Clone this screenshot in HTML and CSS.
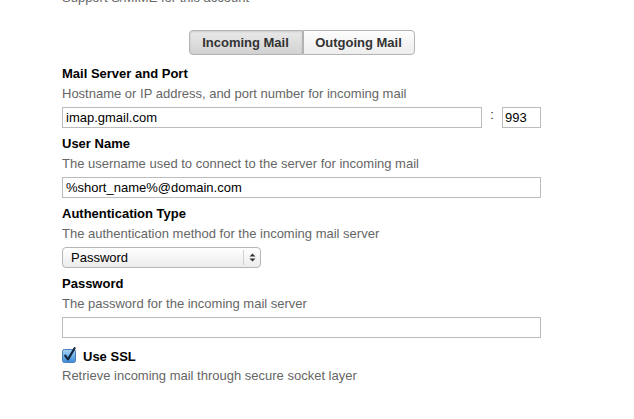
FILE: index.html
```html
<!DOCTYPE html>
<html>
<head>
  <title>Account Settings</title>
  <link rel="stylesheet" href="styles.css">
</head>
<body>
  <div class="container">
    <p class="intro">Support S/MIME for this account</p>

    <div class="tabs">
      <button class="tab active">Incoming Mail</button>
      <button class="tab">Outgoing Mail</button>
    </div>

    <div class="field">
      <div class="label">Mail Server and Port</div>
      <div class="desc">Hostname or IP address, and port number for incoming mail</div>
      <div class="server-row">
        <input type="text" class="text host" value="imap.gmail.com">
        <span class="colon">:</span>
        <input type="text" class="text port" value="993">
      </div>
    </div>

    <div class="field">
      <div class="label">User Name</div>
      <div class="desc">The username used to connect to the server for incoming mail</div>
      <input type="text" class="text wide" value="%short_name%@domain.com">
    </div>

    <div class="field">
      <div class="label">Authentication Type</div>
      <div class="desc">The authentication method for the incoming mail server</div>
      <div class="select-wrap">
        <select class="select">
          <option>Password</option>
          <option>MD5 Challenge-Response</option>
          <option>NTLM</option>
          <option>Kerberos</option>
        </select>
        <span class="select-arrows">
          <svg width="7" height="9" viewBox="0 0 7 9"><path d="M3.5 0.5 L6.5 3.5 L0.5 3.5 Z M3.5 8.5 L6.5 5.5 L0.5 5.5 Z" fill="#333"/></svg>
        </span>
      </div>
    </div>

    <div class="field">
      <div class="label">Password</div>
      <div class="desc">The password for the incoming mail server</div>
      <input type="password" class="text wide" value="">
    </div>

    <div class="check-row">
      <span class="checkbox">
        <svg width="16" height="16" viewBox="0 0 16 16">
          <defs>
            <linearGradient id="cb" x1="0" y1="0" x2="0" y2="1">
              <stop offset="0" stop-color="#a9d3f5"/>
              <stop offset="0.5" stop-color="#6fb0e8"/>
              <stop offset="1" stop-color="#3b8ad8"/>
            </linearGradient>
          </defs>
          <rect x="0.5" y="2.5" width="13" height="13" rx="2" fill="url(#cb)" stroke="#4a7fb5"/>
          <path d="M3.2 8.6 L6 12.4 L12.6 1.2" fill="none" stroke="#12263d" stroke-width="2.2" stroke-linecap="round" stroke-linejoin="round"/>
        </svg>
      </span>
      <span class="check-label">Use SSL</span>
    </div>
    <div class="desc">Retrieve incoming mail through secure socket layer</div>
  </div>
</body>
</html>
```

FILE: styles.css
```css
body { margin: 0; font-family: "Liberation Sans", Arial, sans-serif; font-size: 13px; background: #fff; }
.container { width: 479px; margin-left: 62px; }
.intro { margin: -12px 0 0; line-height: 20px; color: #666; }

.tabs { display: flex; justify-content: center; margin: 22px 0 9px; }
.tab { font-family: inherit; font-size: 13px; font-weight: bold; color: #333; height: 25px; padding: 0 11px; border: 1px solid #b3b3b3; background: linear-gradient(#fdfdfd, #ededed); cursor: pointer; }
.tab:first-child { border-radius: 4px 0 0 4px; border-right: none; width: 114px; }
.tab:last-child { border-radius: 0 4px 4px 0; width: 112px; }
.tab.active { background: linear-gradient(#e9e9e9, #d2d2d2); border-right: 1px solid #b3b3b3; box-shadow: inset 0 1px 2px rgba(0,0,0,0.12); }

.field { margin-bottom: 6px; }
.label { font-weight: bold; color: #000; line-height: 20px; }
.desc { color: #666; line-height: 20px; }

.text { box-sizing: border-box; height: 21px; margin-top: 3px; border: 1px solid #bcbcbc; padding: 0 3px; font-family: inherit; font-size: 13px; color: #000; outline: none; }
.wide { width: 479px; display: block; }
.server-row { display: flex; align-items: center; margin-top: 3px; }
.server-row .text { margin-top: 0; }
.host { width: 420px; }
.colon { width: 20px; text-align: center; color: #333; margin-top: -6px; }
.port { width: 39px; padding: 0 2px; }

.select-wrap { position: relative; width: 199px; margin-top: 3px; }
.select { appearance: none; -webkit-appearance: none; box-sizing: border-box; width: 199px; height: 21px; padding: 0 20px 0 8px; border: 1px solid #b5b5b5; border-radius: 4px; background: linear-gradient(#ffffff, #ececec); font-family: inherit; font-size: 13px; color: #000; outline: none; }
.select-arrows { position: absolute; right: 1px; top: 3px; width: 16px; height: 15px; border-left: 1px solid #d0d0d0; display: flex; align-items: center; justify-content: center; pointer-events: none; }

.check-row { display: flex; align-items: center; height: 20px; margin-top: 8px; }
.checkbox { width: 16px; height: 16px; margin-right: 5px; margin-top: -3px; }
.check-label { font-weight: bold; color: #000; font-size: 13px; }
```
